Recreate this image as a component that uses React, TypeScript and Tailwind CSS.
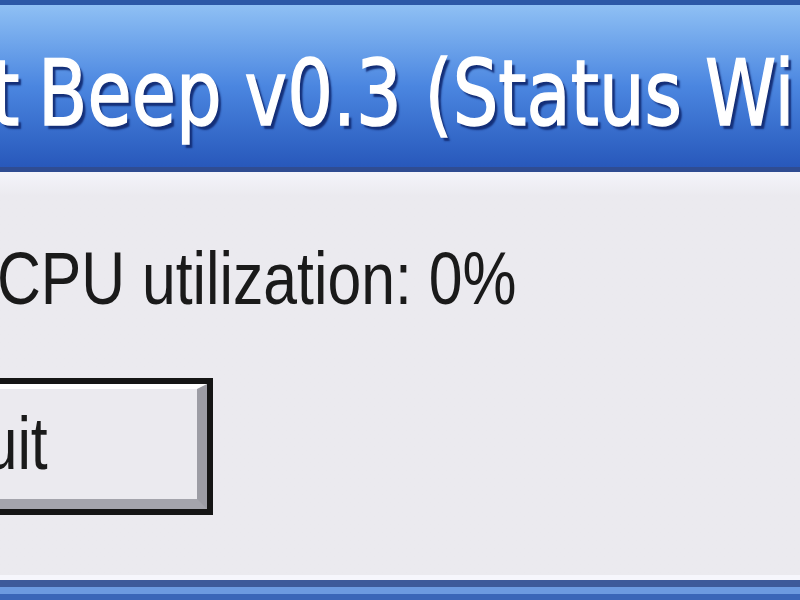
import React from 'react';

const TITLE_FONT = { fontFamily: '"DejaVu Sans", Verdana, sans-serif' };
const BODY_FONT = { fontFamily: '"Liberation Sans", Arial, sans-serif' };

export default function App() {
  return (
    <div className="w-[800px] h-[600px] overflow-hidden flex flex-col bg-[#ebeaef]">
      {/* title bar */}
      <div className="h-[5px] bg-[#2c58a6]" />
      <div className="h-[162px] bg-gradient-to-b from-[#8fc0f4] via-[#4b86e0] to-[#2858bb] flex items-center overflow-hidden">
        <div
          className="flex items-baseline whitespace-nowrap text-white text-[90px] leading-none pt-[16px] [text-shadow:4px_4px_2px_#142f78] [-webkit-text-stroke:1.5px_white]"
          style={TITLE_FONT}
        >
          <div className="w-[20px] flex justify-end">
            <span className="inline-block [transform:scaleX(0.8)] origin-right">Quiet</span>
          </div>
          <span className="inline-block ml-[18px] [transform:scaleX(0.8)] origin-left">
            Beep v0.3 (Status Window)
          </span>
        </div>
      </div>
      <div className="h-[5px] bg-[#2f4c92]" />

      {/* body */}
      <div className="flex-1 flex flex-col bg-gradient-to-b from-[#f4f4fb] to-[#ebeaef] to-[6%]">
        <div
          className="mt-[70px] -ml-[3px] text-[74px] leading-none text-[#1a1a1a] whitespace-nowrap [transform:scaleX(0.82)] origin-left"
          style={BODY_FONT}
        >
          CPU utilization: 0%
        </div>

        <div className="mt-[62px] -ml-[120px] w-[333px] h-[137px] border-[6px] border-[#151515] bg-[#ebeaef] flex">
          <div className="flex-1 flex border-t-[5px] border-t-white border-r-[10px] border-r-[#9c9ca4] border-b-[10px] border-b-[#a4a4ac]">
            <div
              className="w-[162px] flex justify-end items-center text-[74px] leading-none text-[#1a1a1a]"
              style={BODY_FONT}
            >
              <span className="inline-block [transform:scaleX(0.82)] origin-right">Quit</span>
            </div>
          </div>
        </div>

        <div className="flex-1" />
      </div>

      {/* bottom frame */}
      <div className="h-[5px] bg-[#f6f6fc]" />
      <div className="h-[7px] bg-[#3d5a9a]" />
      <div className="h-[7px] bg-[#6c9ae0]" />
      <div className="h-[6px] bg-[#3a66b8]" />
    </div>
  );
}
